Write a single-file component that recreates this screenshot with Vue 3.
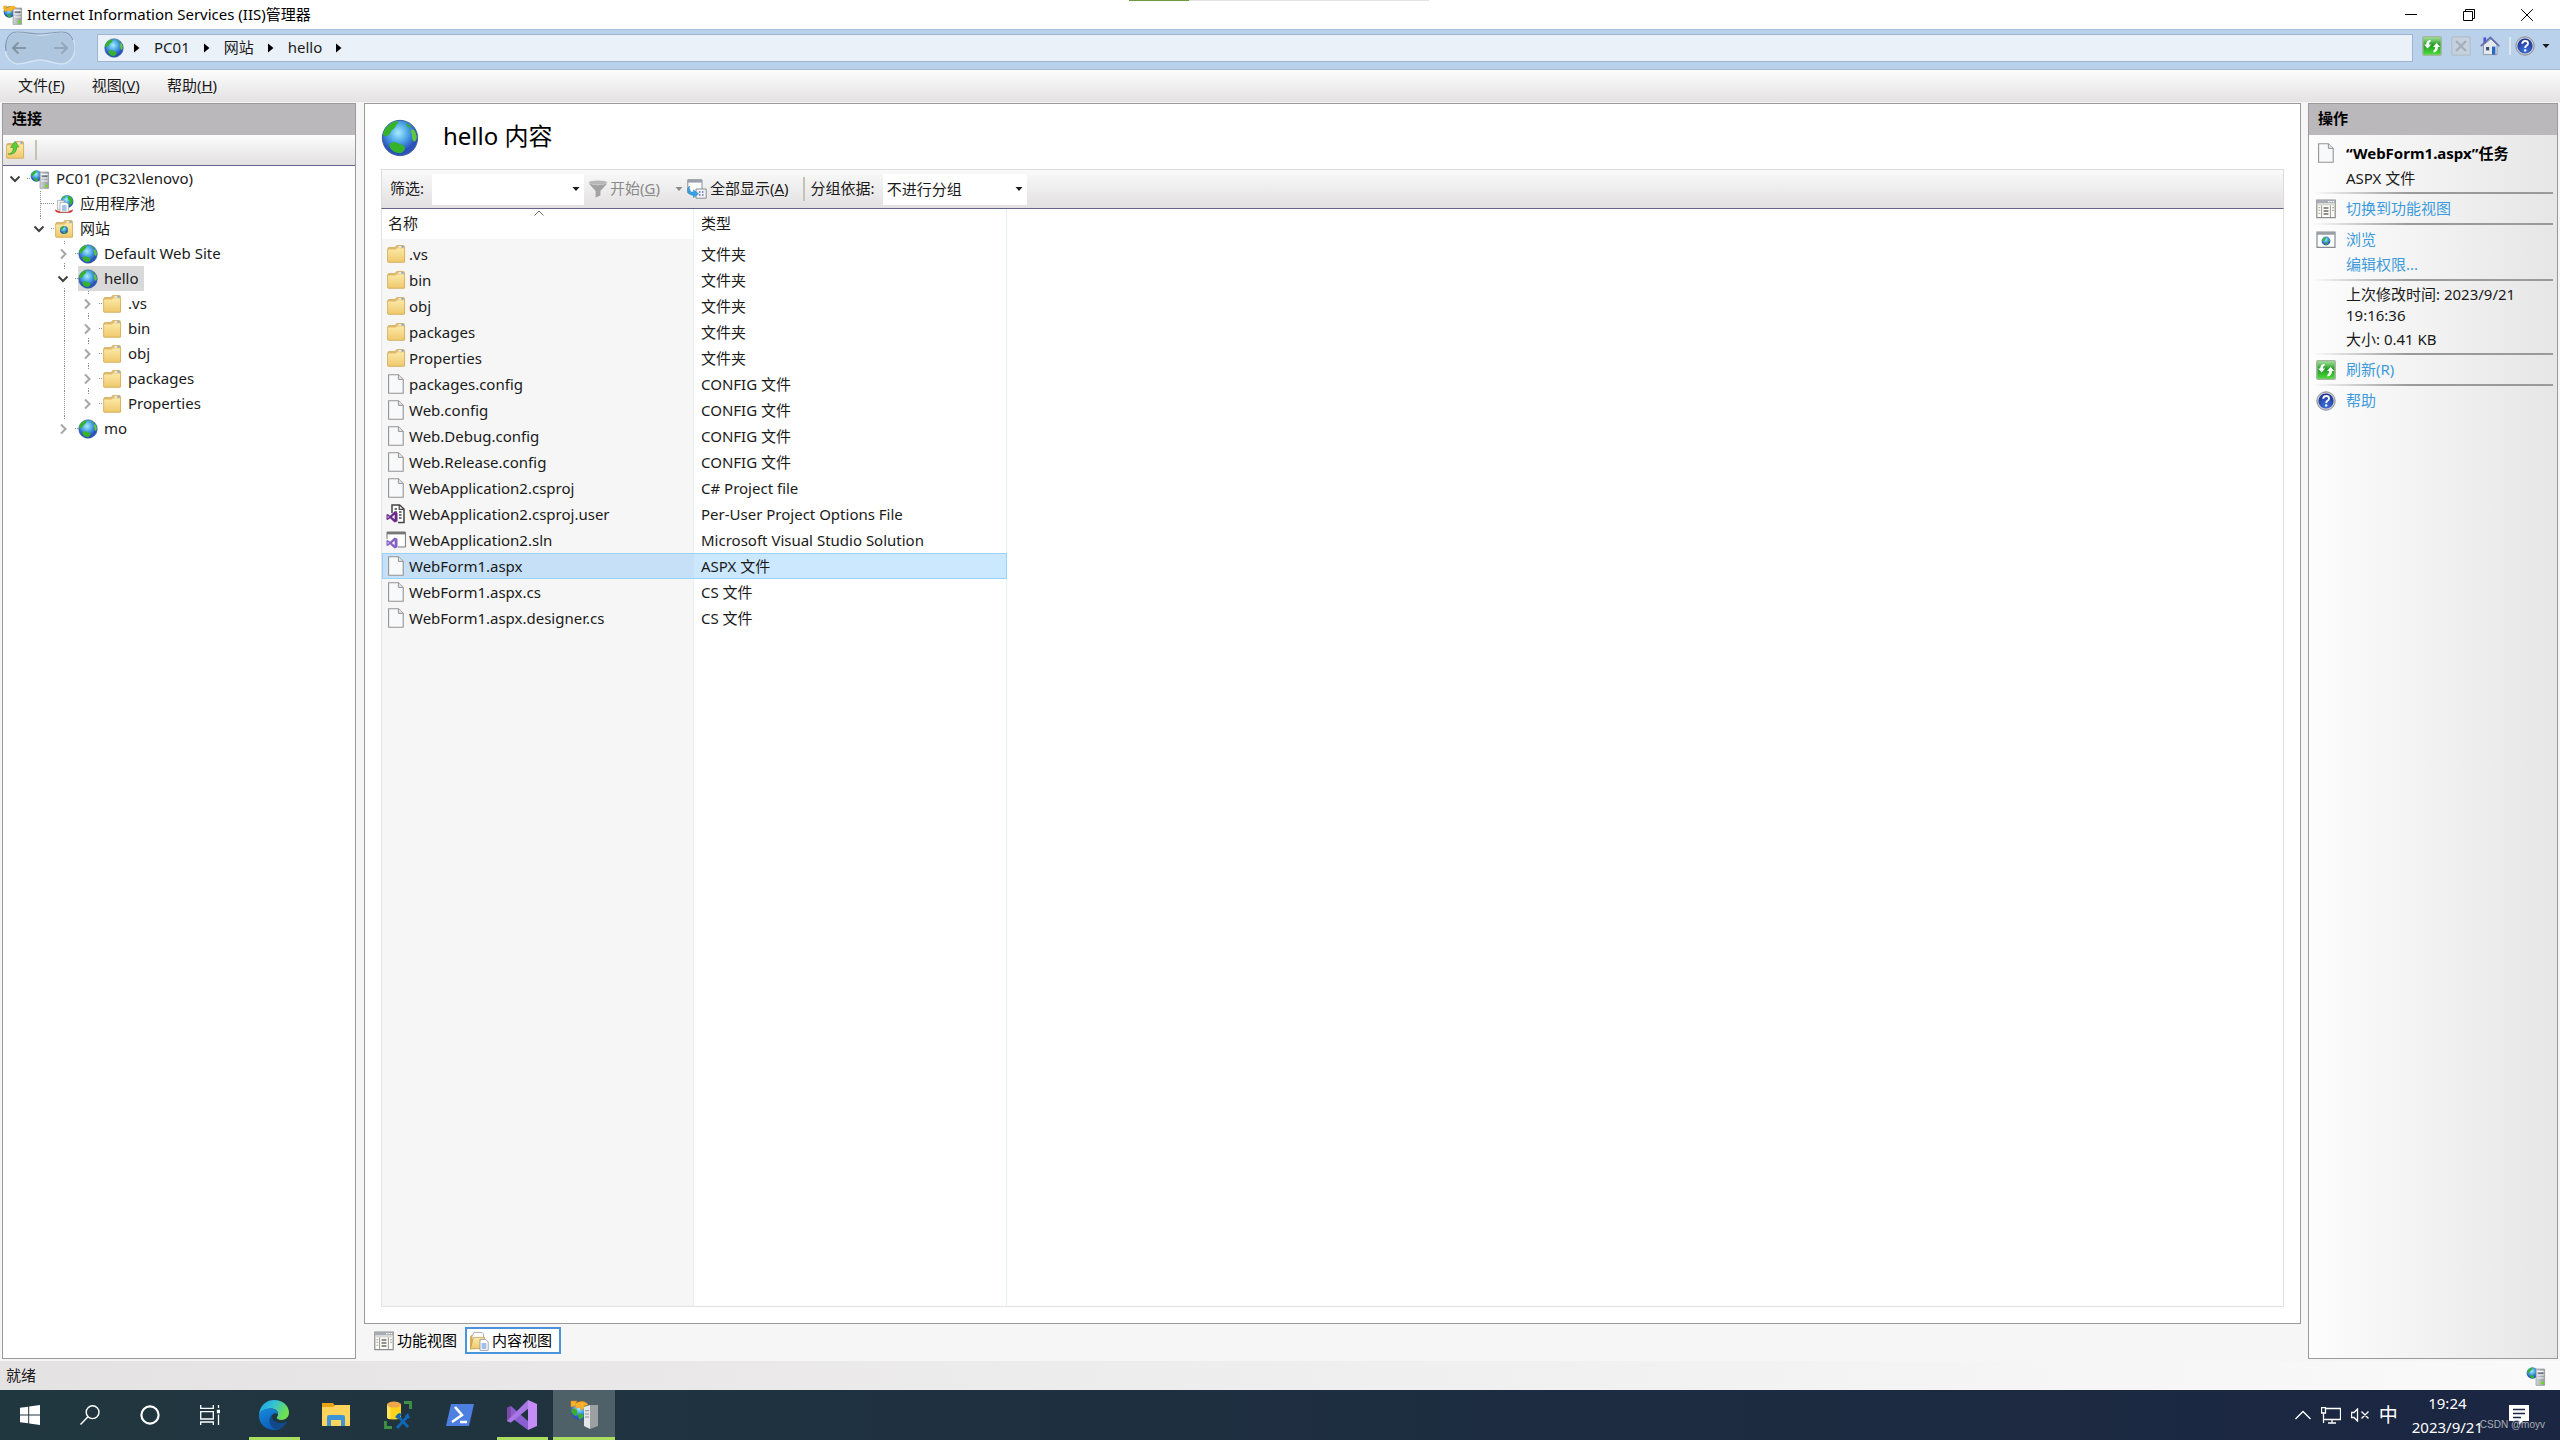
<template>
  <div class="screen">
    <svg class="defs" aria-hidden="true">
      <defs>
        <radialGradient id="gSea" cx="0.45" cy="0.35" r="0.7">
          <stop offset="0" stop-color="#a8ecff" />
          <stop offset="0.4" stop-color="#4ba4e4" />
          <stop offset="0.75" stop-color="#2a50bc" />
          <stop offset="1" stop-color="#2c55b8" />
        </radialGradient>
        <linearGradient id="gFolder" x1="0" y1="0" x2="0" y2="1">
          <stop offset="0" stop-color="#fdeaa8" />
          <stop offset="1" stop-color="#efc86c" />
        </linearGradient>
        <linearGradient id="gServer" x1="0" y1="0" x2="1" y2="0">
          <stop offset="0" stop-color="#d4d8dc" />
          <stop offset="1" stop-color="#90979d" />
        </linearGradient>
        <linearGradient id="gGreen" x1="0" y1="0" x2="0" y2="1">
          <stop offset="0" stop-color="#a8e89c" />
          <stop offset="0.45" stop-color="#229a26" />
          <stop offset="1" stop-color="#4be038" />
        </linearGradient>
        <radialGradient id="gHelp" cx="0.5" cy="0.8" r="0.8">
          <stop offset="0" stop-color="#3f74e0" />
          <stop offset="1" stop-color="#1a2f8c" />
        </radialGradient>
        <linearGradient id="gEdgeTop" x1="0" y1="0" x2="1" y2="0.4">
          <stop offset="0" stop-color="#1b9de2" />
          <stop offset="0.5" stop-color="#35c1d6" />
          <stop offset="1" stop-color="#6fe04e" />
        </linearGradient>
        <linearGradient id="gEdgeLow" x1="0" y1="0" x2="0.4" y2="1">
          <stop offset="0" stop-color="#1689dc" />
          <stop offset="1" stop-color="#0d5fb8" />
        </linearGradient>
      </defs>
      <symbol id="globe" viewBox="0 0 20 20">
        <circle cx="10" cy="10" r="9.3" fill="url(#gSea)" stroke="#3a5f96" stroke-width="0.5" />
        <path d="M3 4.2C5 2 7.4 1 9 1.2 8.8 2.6 8.2 3 7.6 4.2 6.8 5.4 5.8 5.4 5 7 4.4 8.6 3.4 9.4 1.1 8.6 1.2 7 1.8 5.4 3 4.2Z" fill="#35b32b" />
        <path d="M4.4 13.2C6.4 11.8 8 12.2 9.4 13 11.4 13.6 13 14.2 12.6 15.6 12 17.6 10.4 18.2 8.4 17.8 6 17.2 4.2 15.4 4.4 13.2Z" fill="#35b32b" />
        <path d="M16.2 5.4C17.6 5 18.4 7 18.8 9 19 11 18 12.4 17 11.6 16 10.4 16.6 9.2 16.2 8 15.8 7 15.4 6 16.2 5.4Z" fill="#5cc83a" />
        <path d="M13.6 2.2 16 4 15.2 4.8 13.4 3.4Z" fill="#35b32b" />
      </symbol>
      <symbol id="folder" viewBox="0 0 20 20">
        <path d="M2 18V4.4Q2 3.6 2.8 3.6H9L10.6 1.6H17.4Q18.4 1.6 18.4 2.6V18Z" fill="#e8c274" stroke="#c9a04c" stroke-width="0.7" />
        <path d="M1.6 5H9.6L11 3.8H18.6V17.6Q18.6 18.2 18 18.2H2.2Q1.6 18.2 1.6 17.6Z" fill="url(#gFolder)" stroke="#d2aa58" stroke-width="0.7" />
        <path d="M12.4 2.4H17V3.6H12.4Z" fill="#fff" />
        <path d="M15.4 2.2H17.2V3.6H15.4Z" fill="#4a9be8" />
      </symbol>
      <symbol id="siteFolder" viewBox="0 0 20 20">
        <use href="#folder" />
        <circle cx="10" cy="11" r="4" fill="url(#gSea)" />
        <path d="M7 9Q9 6.8 10.4 7.4 10 9 8.6 10.6 7.4 11 6.6 10.6ZM9 12.6Q11.6 12 12 13.4 11 15.2 9.6 14.6ZM13 8.8 14 11 13 12Z" fill="#35b32b" />
      </symbol>
      <symbol id="upFolder" viewBox="0 0 20 20">
        <use href="#folder" />
        <path d="M3 14C7 13.6 8.4 11 8.2 7.4H5.6L10 1.4 14 7H11.6C11.8 12 8.6 15 3 14Z" fill="#5bcf3a" stroke="#2f9422" stroke-width="0.6" />
      </symbol>
      <symbol id="server" viewBox="0 0 20 20">
        <circle cx="6.4" cy="7" r="5.8" fill="url(#gSea)" />
        <path d="M2 4Q4.6 1 7 1.6 6 4.4 4 5.4 3 7.4 1 7ZM3.4 9.4Q6.4 8.6 8.4 10.4 7.6 12.8 5.6 12.4Z" fill="#35b32b" />
        <path d="M10 3H18.6V19.4H10Z" fill="url(#gServer)" stroke="#858c92" stroke-width="0.6" />
        <path d="M11 5.4H17.8M11 9H17.8M11 12H17.8" stroke="#f4f6f7" stroke-width="1.1" />
        <path d="M12 7.2H17" stroke="#41474d" stroke-width="0.8" />
        <circle cx="16.4" cy="17" r="1.4" fill="#6de000" />
      </symbol>
      <symbol id="iis" viewBox="0 0 20 20">
        <use href="#server" />
        <path d="M0.6 1H4L3 3.4 7 1.4 11 1 13.4 3 10 4 8 7 6 5 2.4 6.6 0.6 4Z" fill="#ffb52a" stroke="#e08a10" stroke-width="0.4" />
      </symbol>
      <symbol id="bigiis" viewBox="0 0 28 30">
        <circle cx="10" cy="11" r="9" fill="url(#gSea)" />
        <path d="M2 9Q5 8 7 10 8 13 6 16 3 15 1.400 12ZM8 14Q13 13 14 16 12 20 9 19ZM14 5 18 7 17 11 14 10Z" fill="#3cae2c" />
        <path d="M1 1H7L5.500 3.500Q9 1 13 1.500T18 5L14 5.500 15 8 11 10 10 7 5 8.500 6 5.500 1 7Z" fill="#ffb02a" stroke="#e28a14" stroke-width="0.500" />
        <path d="M14 7 20 5V29L14 26Z" fill="#e4e6e8" />
        <path d="M20 5H28V26L20 29Z" fill="#9ca0a3" />
        <path d="M15 11 19 10.500M15 14H19M15 17H19" stroke="#8d9296" stroke-width="1" />
      </symbol>
      <symbol id="pool" viewBox="0 0 20 20">
        <circle cx="13" cy="7.4" r="6.4" fill="url(#gSea)" />
        <path d="M14 1.4Q18 2.6 19 6.6 18 11 15.6 11.4 14.4 9 16 7 13 5 14 1.4ZM8 4Q10 1.2 12 2 11 4 9 4.6Z" fill="#35b32b" />
        <path d="M1 15.6Q1 19 6 19H14Q19 19 19 15.6L15 17H5Z" fill="#d63a30" />
        <path d="M3.4 6.4H10V15.4H3.4Z" fill="#f6f6f6" stroke="#989ea4" stroke-width="0.7" />
        <path d="M6 8.4H12.4L14.6 10.6V18H6Z" fill="#fff" stroke="#989ea4" stroke-width="0.7" />
        <path d="M8 12H12.6M8 14H12.6M8 16H12.6" stroke="#3f7cd0" stroke-width="0.9" />
      </symbol>
      <symbol id="page" viewBox="0 0 20 20">
        <path d="M2.6 0.8H12.4L17.2 5.4V19.2H2.6Z" fill="#f8f9fa" stroke="#949494" stroke-width="1.1" />
        <path d="M12.4 0.8V5.4H17.2" fill="#e3e3e3" stroke="#949494" stroke-width="1" />
      </symbol>
      <symbol id="vsmark" viewBox="0 0 20 20">
        <path fill-rule="evenodd" d="M14.4 0.8 19.2 2.8V17.2L14.4 19.2 6.6 12 2.8 15.2 0.8 14V6L2.8 4.8 6.6 8ZM14.4 6.4 9.8 10 14.4 13.6ZM2.8 7.8V12.2L5 10Z" />
      </symbol>
      <symbol id="userfile" viewBox="0 0 20 20">
        <path d="M6 9V1H13.6L18 5V18.6H12" fill="#fff" stroke="#444" stroke-width="1.5" />
        <path d="M13.2 1V5.4H18" fill="none" stroke="#444" stroke-width="1.2" />
        <path d="M8.6 5H11M8.6 8H11M13 8H15.6M13 11H15.6M13 14H15.6" stroke="#444" stroke-width="1.3" />
        <use href="#vsmark" x="0" y="7" width="12" height="12" fill="#6d2a8c" />
      </symbol>
      <symbol id="slnfile" viewBox="0 0 20 20">
        <path d="M1 9V2H19.4V17H12" fill="#fff" stroke="#777" stroke-width="1" />
        <path d="M1 2H19.4V4.4H1Z" fill="#777" />
        <use href="#vsmark" x="0" y="7" width="12" height="12" fill="#8661c5" />
      </symbol>
      <symbol id="feature" viewBox="0 0 20 20">
        <path d="M0.8 1H19.2V18.6H0.8Z" fill="#fbfbf8" stroke="#8d8d8d" stroke-width="1.2" />
        <path d="M1 1H19V4.4H1Z" fill="#a7abb2" />
        <path d="M12 2.6H13.4M14.4 2.6H15.8M16.8 2.6H18" stroke="#fff" stroke-width="1.2" />
        <path d="M1 4.8H19V6.4H1Z" fill="#d8d8d0" />
        <path d="M5.6 6.4V18.6M14.4 6.4V18.6" stroke="#8d8d8d" stroke-width="0.9" />
        <path d="M2.4 8.6H4.2M2.4 11.4H4.2M2.4 14.4H4.2M16 8.6H18M16 11.4H18" stroke="#b6b6a8" stroke-width="1.2" />
        <path d="M7.6 9H12.4M7.6 12H12.4M7.6 15H12.4" stroke="#6c6c62" stroke-width="1.3" />
      </symbol>
      <symbol id="browse" viewBox="0 0 20 20">
        <path d="M1 2H19V17.4H1Z" fill="#fff" stroke="#858b91" stroke-width="1.2" />
        <path d="M1 2H19V4.8H1Z" fill="#9aa0a8" />
        <circle cx="10" cy="11" r="4.4" fill="url(#gSea)" />
        <path d="M6.8 9Q8.6 6.8 10.2 7.2 10 9.4 8.4 11 7 11.2 6.2 10.4ZM9 12.8Q12 12 12 13.6 11 15.4 9.6 15ZM13 8.6 14.2 11 13 12Z" fill="#35b32b" />
      </symbol>
      <symbol id="contentview" viewBox="0 0 20 20">
        <path d="M3 5 5 1.4H13L14.6 3V10H3Z" fill="#fff" stroke="#999" stroke-width="0.8" />
        <path d="M1 17.4V5.4L3 3.6V15Z" fill="#d4ac58" />
        <path d="M1.4 18 4.4 6.4H15.6L14.6 17.4Z" fill="url(#gFolder)" stroke="#bc9342" stroke-width="0.7" />
        <path d="M11 8.4H16.6L19.2 11V19.4H11Z" fill="#fff" stroke="#8c9096" stroke-width="0.8" />
        <path d="M12.6 13H17.4M12.6 15H17.4M12.6 17H17.4" stroke="#3f7cd0" stroke-width="1" />
      </symbol>
      <symbol id="refresh" viewBox="0 0 20 20">
        <rect x="0.8" y="0.8" width="18.4" height="18.4" rx="1" fill="url(#gGreen)" stroke="#a3b7a0" stroke-width="1.5" />
        <path d="M8.6 5.4Q6.800 5.800 7 8.600H9.200L5.600 12.600 2 8.600H4.200Q4.200 4.400 8.600 3.800Z" fill="#fff" />
        <path d="M11.400 14.800Q13.400 14 13.200 11H11L14.600 7 18.200 11H16Q16 15.800 11.400 16.600Z" fill="#fff" />
      </symbol>
      <symbol id="stop" viewBox="0 0 20 20">
        <rect x="0.8" y="0.8" width="18.4" height="18.4" rx="1" fill="#c6d1dd" stroke="#b1becc" stroke-width="1.2" />
        <path d="M5 5 15 15M15 5 5 15" stroke="#a3afbc" stroke-width="2.4" />
      </symbol>
      <symbol id="home" viewBox="0 0 20 20">
        <path d="M3.4 1.4H6.2V7H3.4Z" fill="#4d55d8" />
        <path d="M3.4 9 11 3 17 9V18.6H3.4Z" fill="#e6e9ee" stroke="#8b929c" stroke-width="0.9" />
        <path d="M0.8 10.2 10.4 1.4 19.4 10.2" fill="none" stroke="#646bb0" stroke-width="1.6" />
        <path d="M6 11H9.2V14.4H6Z" fill="#3d4f78" />
        <path d="M12 10.6H15.4V18.6H12Z" fill="#2868c0" />
      </symbol>
      <symbol id="help" viewBox="0 0 20 20">
        <circle cx="10" cy="10" r="9.2" fill="#c9cbd0" stroke="#8c9098" stroke-width="1" />
        <circle cx="10" cy="10" r="7.6" fill="url(#gHelp)" />
        <path d="M7.2 7.8Q7.4 5 10.2 5 13 5 13 7.4 13 8.8 11.4 9.8 10.2 10.6 10.2 12" fill="none" stroke="#fff" stroke-width="1.9" />
        <circle cx="10.2" cy="14.4" r="1.2" fill="#fff" />
      </symbol>
      <symbol id="funnel" viewBox="0 0 20 20">
        <ellipse cx="10" cy="3.6" rx="9.2" ry="2.2" fill="#b8b8b8" />
        <path d="M0.8 4.4 7.6 12V18.4L12.4 16.4V12L19.2 4.4Q10 8 0.8 4.4Z" fill="#a2a2a2" />
      </symbol>
      <symbol id="showall" viewBox="0 0 20 20">
        <path d="M0.8 0.8H15V14H0.8Z" fill="#fff" stroke="#888e96" stroke-width="1" />
        <path d="M0.8 0.8H15V3.6H0.8Z" fill="#9ba1aa" />
        <path d="M9 10H19.2V19.2H9Z" fill="#f4f4fa" stroke="#888e96" stroke-width="1" />
        <path d="M12 13H13.4M15 13H16.4M12 16H13.4M15 16H16.4" stroke="#5560a0" stroke-width="1.4" />
        <path d="M2.4 7Q2 13.4 6.4 13.4V11L11.6 14.8 6.4 18.6V16.2Q0.6 16.4 0.6 10Z" fill="#37a3e6" stroke="#1f78b8" stroke-width="0.5" />
      </symbol>
      <symbol id="tri" viewBox="0 0 8 8">
        <path d="M0.500 2H7.500L4 6Z" fill="currentColor" />
      </symbol>
    </svg>

    <header class="titlebar">
      <svg class="ic20"><use href="#iis" /></svg>
      <h1>Internet Information Services (IIS)管理器</h1>
      <div class="progress"><i></i></div>
      <div class="winbtns">
        <button aria-label="最小化"><svg viewBox="0 0 12 12"><path d="M0 5.5H12" /></svg></button>
        <button aria-label="还原"><svg viewBox="0 0 12 12"><path d="M0.5 2.5H9.5V11.5H0.5ZM2.5 2.5V0.5H11.5V9.5H9.5" /></svg></button>
        <button aria-label="关闭"><svg viewBox="0 0 12 12"><path d="M0.2 0.2 11.8 11.8M11.8 0.2 0.2 11.8" /></svg></button>
      </div>
    </header>

    <div class="addressbar">
      <div class="nav">
        <svg class="navshape" viewBox="0 0 70 34">
          <path d="M12 1C22 1 26 4 35 4S48 1 57 1C75 3 74 31 57 33 48 33 44 29 35 29S22 33 12 33C-5 29-3 3 12 1Z" fill="#aec6de" stroke="#d3e3f3" stroke-width="1.5" />
          <path d="M1 20C-1 8 5 1 12 1 22 1 26 3 35 3S48 1 57 1C62 1 66 4 68 9" fill="none" stroke="#8197af" stroke-width="1.2" />
        </svg>
        <button aria-label="后退"><svg viewBox="0 0 16 14"><path d="M15 7H2M7.5 1.5 2 7 7.5 12.5" stroke="#8593a2" /></svg></button>
        <button aria-label="前进"><svg viewBox="0 0 16 14"><path d="M1 7H14M8.500 1.500 14 7 8.500 12.500" stroke="#95a6b8" /></svg></button>
      </div>
      <nav class="crumbs">
        <svg class="ic20"><use href="#globe" /></svg>
        <template v-for="c in crumbs" :key="c">
          <svg class="sep" viewBox="0 0 6 10"><path d="M0 0.500 5.500 5 0 9.500Z" /></svg>
          <a href="#">{{ c }}</a>
        </template>
        <svg class="sep" viewBox="0 0 6 10"><path d="M0 0.500 5.500 5 0 9.500Z" /></svg>
      </nav>
      <div class="quick">
        <button aria-label="刷新"><svg class="ic20"><use href="#refresh" /></svg></button>
        <button aria-label="停止"><svg class="ic20"><use href="#stop" /></svg></button>
        <button aria-label="主页"><svg class="ic20"><use href="#home" /></svg></button>
        <i class="bar"></i>
        <button aria-label="帮助"><svg class="ic20"><use href="#help" /></svg><svg class="tri"><use href="#tri" /></svg></button>
      </div>
    </div>

    <nav class="menu">
      <button v-for="m in menus" :key="m.key">{{ m.name }}(<u>{{ m.key }}</u>)</button>
    </nav>

    <div class="body">
      <aside class="panel left">
        <h2>连接</h2>
        <div class="lefttools">
          <button aria-label="向上"><svg class="ic20"><use href="#upFolder" /></svg></button>
          <i class="groove"></i>
        </div>
        <ul class="tree">
          <li v-for="n in tree" :key="n.id" :class="{ leaf: !n.state, last: n.last, root: n.level === 0 }">
            <span v-for="g in n.level" :key="g" class="guide" :class="{ on: n.lines && n.lines.includes(g - 1) }"></span>
            <span class="twist">
              <button v-if="n.state" :class="n.state" :aria-label="n.state === 'open' ? '折叠' : '展开'">
                <svg v-if="n.state === 'open'" viewBox="0 0 12 12"><path d="M1.500 3.500 6 8 10.500 3.500" stroke="#404040" /></svg>
                <svg v-else viewBox="0 0 12 12"><path d="M4 1.500 8.500 6 4 10.500" stroke="#a6a6a6" /></svg>
              </button>
            </span>
            <span class="stub"></span>
            <span class="node" :class="{ picked: n.picked }">
              <svg class="ic20"><use :href="'#' + n.icon" /></svg>
              <span class="text">{{ n.text }}</span>
            </span>
          </li>
        </ul>
      </aside>

      <main class="center">
        <section class="panel content">
          <div class="heading">
            <svg class="bigglobe"><use href="#globe" /></svg>
            <h2>hello 内容</h2>
          </div>
          <div class="filterbar">
            <label for="filter">筛选:</label>
            <span class="combo">
              <input id="filter" v-model="filter" type="text" />
              <svg class="tri"><use href="#tri" /></svg>
            </span>
            <button class="go" disabled>
              <svg class="ic20"><use href="#funnel" /></svg><span class="text">开始(<u>G</u>)</span>
              <svg class="tri"><use href="#tri" /></svg>
            </button>
            <button class="all"><svg class="ic20"><use href="#showall" /></svg><span class="text">全部显示(<u>A</u>)</span></button>
            <i class="groove"></i>
            <label for="group">分组依据:</label>
            <span class="combo">
              <select id="group"><option>不进行分组</option></select>
              <svg class="tri"><use href="#tri" /></svg>
            </span>
          </div>
          <div class="list">
            <table>
              <thead>
                <tr>
                  <th><span class="text">名称</span><svg class="sort" viewBox="0 0 10 6"><path d="M0.500 5.500 5 1 9.500 5.500" /></svg></th>
                  <th><span class="text">类型</span></th>
                </tr>
              </thead>
              <tbody>
                <tr v-for="f in files" :key="f.name" :class="{ selected: f.name === current }" @click="current = f.name">
                  <td><div class="file"><svg class="ic20"><use :href="'#' + f.icon" /></svg>{{ f.name }}</div></td>
                  <td>{{ f.type }}</td>
                </tr>
              </tbody>
            </table>
          </div>
        </section>
        <div class="tabs">
          <button><svg class="ic20"><use href="#feature" /></svg><span class="text">功能视图</span></button>
          <button class="active"><svg class="ic20"><use href="#contentview" /></svg><span class="text">内容视图</span></button>
        </div>
      </main>

      <aside class="panel right">
        <h2>操作</h2>
        <div class="group">
          <p class="item"><svg class="ic20"><use href="#page" /></svg><b>“WebForm1.aspx”任务</b></p>
          <p class="item">ASPX 文件</p>
        </div>
        <div class="group">
          <p class="item"><svg class="ic20"><use href="#feature" /></svg><a href="#">切换到功能视图</a></p>
        </div>
        <div class="group">
          <p class="item"><svg class="ic20"><use href="#browse" /></svg><a href="#">浏览</a></p>
          <p class="item"><a href="#">编辑权限...</a></p>
        </div>
        <div class="group">
          <p class="item wrap">上次修改时间: 2023/9/21 19:16:36</p>
          <p class="item">大小: 0.41 KB</p>
        </div>
        <div class="group">
          <p class="item"><svg class="ic20"><use href="#refresh" /></svg><a href="#">刷新(R)</a></p>
        </div>
        <div class="group">
          <p class="item"><svg class="ic20"><use href="#help" /></svg><a href="#">帮助</a></p>
        </div>
      </aside>
    </div>

    <div class="status">
      <span class="text">就绪</span>
      <svg class="ic20"><use href="#server" /></svg>
    </div>

    <footer class="taskbar">
      <button aria-label="开始">
        <svg width="20" height="20" viewBox="0 0 20 20"><path d="M0 2.800 8.200 1.700V9.500H0ZM9.200 1.500 20 0V9.500H9.200ZM0 10.500H8.200V18.300L0 17.200ZM9.200 10.500H20V20L9.200 18.500Z" fill="#fff" /></svg>
      </button>
      <button aria-label="搜索">
        <svg width="20" height="20" viewBox="0 0 20 20" fill="none" stroke="#fff" stroke-width="1.400"><circle cx="12.600" cy="7.200" r="6.400" /><path d="M8 11.800 0.500 19.500" /></svg>
      </button>
      <button aria-label="Cortana">
        <svg width="20" height="20" viewBox="0 0 20 20"><circle cx="10" cy="10" r="8.600" fill="none" stroke="#fff" stroke-width="2.200" /></svg>
      </button>
      <button aria-label="任务视图">
        <svg width="20" height="20" viewBox="0 0 20 20" fill="none" stroke="#fff" stroke-width="1.300"><path d="M0.700 0V3.300H13.300V0M0.700 6.700H13.300V14H0.700ZM0.700 20V17H13.300V20M18.500 0V3M18.500 9.500V20" /><path d="M17.500 5.500H19.500V7.500H17.500Z" fill="#fff" /></svg>
      </button>
      <div class="apps">
        <button class="running" aria-label="Edge">
          <svg width="30" height="30" viewBox="0 0 30 30">
            <path d="M0 16C0 6 7 0 15 0 24 0 30 6 30 12.600 30 17 27 20 22.500 20 19.500 20 17.800 18.800 17.800 17.800 17.800 17 19 16.500 19 14 19 11 16 8.600 12 8.600 6 8.600 1 11.400 0 16Z" fill="url(#gEdgeTop)" />
            <path d="M0 16C0 11.500 5 8.500 11 8.600 16 8.700 19 11 19 14 16 12 12.400 14.500 12.400 18 12.400 23 17 28 22 28 20 29.400 17.800 30 15 30 6 30 0 23.500 0 16Z" fill="url(#gEdgeLow)" />
            <path d="M13.600 14.200C11 16.600 10 19 10.600 22 11.600 26.600 15.500 29.800 18 29.600 22.500 28.600 26 26 27.800 22.600 28.200 21.800 27.600 21.500 26.900 21.800 22 24.400 15 22.600 13 18 12.600 16.600 12.800 15 13.600 14.200Z" fill="#114a8b" />
          </svg>
        </button>
        <button aria-label="文件资源管理器">
          <svg width="28" height="24" viewBox="0 0 28 24"><path d="M0 0H11L13 3H28V22H0Z" fill="#e8a317" /><path d="M0 4H11L13 2H28V23H0Z" fill="#ffd35c" /><path d="M5 23V14Q5 12 7 12H21Q23 12 23 14V23H19V17H9V23Z" fill="#3a96d8" /></svg>
        </button>
        <button aria-label="SQL">
          <svg width="28" height="28" viewBox="0 0 28 28">
            <path d="M3 3V16Q3 18.500 10 18.500T17 16V3Z" fill="#ffd21c" /><path d="M3 3V16Q3 18 6.500 18.300V3Z" fill="#ffe45e" />
            <ellipse cx="10" cy="3.600" rx="7" ry="3" fill="#f0a64a" />
            <path d="M20 1.500H26.500V8M1.500 20V26.500H8" fill="none" stroke="#3f9145" stroke-width="2.800" />
            <path d="M13 14 24 26M24 15 13 27" stroke="#1067b4" stroke-width="2.600" /><path d="M11 16 15 12 18 13 14 18ZM21 15 24 12 26 17 22 18Z" fill="#1067b4" />
          </svg>
        </button>
        <button aria-label="PowerShell">
          <svg width="28" height="22" viewBox="0 0 28 22"><path d="M5 0H28L23 22H0Z" fill="#4c7fe0" /><path d="M9 3 16 11 6 18M14 18H21" fill="none" stroke="#fff" stroke-width="2.600" /></svg>
        </button>
        <button class="running" aria-label="Visual Studio">
          <svg width="30" height="30" viewBox="0 0 30 30">
            <path d="M0 8 4 6 22 22 21 30 4 17.600V22.500L0 21Z" fill="#8b5fd0" />
            <path d="M0 8 4 6V22.500L0 21Z" fill="#7d4aa8" />
            <path d="M0 21 4 22.500 22 8 21 0Z" fill="#a877e4" />
            <path d="M21 0 30 4V26L21 30Z" fill="#c48cf4" />
          </svg>
        </button>
        <button class="running current" aria-label="IIS">
          <svg width="28" height="30"><use href="#bigiis" /></svg>
        </button>
      </div>
      <div class="tray">
        <button aria-label="显示隐藏的图标"><svg width="16" height="10" viewBox="0 0 16 10"><path d="M0.500 9 8 1.500 15.500 9" /></svg></button>
        <button aria-label="网络"><svg width="20" height="17" viewBox="0 0 20 17"><path d="M4.500 1.500H19.500V12.500H2.500V6M0.500 0.500H4.500V6H0.500ZM2.500 12.500V16M11 12.500V16M7 16H15" /></svg></button>
        <button aria-label="音量"><svg width="18" height="14" viewBox="0 0 18 14"><path d="M0.500 4.500H3L6.500 1V13L3 9.500H0.500ZM10.500 3.500 17.500 10.500M17.500 3.500 10.500 10.500" /></svg></button>
        <button class="ime">中</button>
        <div class="clock"><span>19:24</span><span>2023/9/21</span></div>
        <button class="note" aria-label="通知"><svg width="20" height="20" viewBox="0 0 20 20"><path d="M0 0H20V16H14L10 20V16H0Z" fill="#fff" stroke="none" /><path d="M4 4.500H16M4 8.500H16M4 12.500H12" stroke="#1b2642" /></svg></button>
        <span class="mark">CSDN @moyv</span>
      </div>
    </footer>
  </div>
</template>

<script setup>
import { ref } from 'vue'

const filter = ref('')
const current = ref('WebForm1.aspx')

const crumbs = ['PC01', '网站', 'hello']

const menus = [
  { name: '文件', key: 'F' },
  { name: '视图', key: 'V' },
  { name: '帮助', key: 'H' }
]

// lines: ancestor levels that still have siblings below
const tree = [
  { id: 1, level: 0, text: 'PC01 (PC32\\lenovo)', icon: 'server', state: 'open' },
  { id: 2, level: 1, text: '应用程序池', icon: 'pool' },
  { id: 3, level: 1, text: '网站', icon: 'siteFolder', state: 'open', last: true },
  { id: 4, level: 2, text: 'Default Web Site', icon: 'globe', state: 'closed' },
  { id: 5, level: 2, text: 'hello', icon: 'globe', state: 'open', picked: true },
  { id: 6, level: 3, text: '.vs', icon: 'folder', state: 'closed', lines: [2] },
  { id: 7, level: 3, text: 'bin', icon: 'folder', state: 'closed', lines: [2] },
  { id: 8, level: 3, text: 'obj', icon: 'folder', state: 'closed', lines: [2] },
  { id: 9, level: 3, text: 'packages', icon: 'folder', state: 'closed', lines: [2] },
  { id: 10, level: 3, text: 'Properties', icon: 'folder', state: 'closed', lines: [2], last: true },
  { id: 11, level: 2, text: 'mo', icon: 'globe', state: 'closed', last: true }
]

const files = [
  { name: '.vs', type: '文件夹', icon: 'folder' },
  { name: 'bin', type: '文件夹', icon: 'folder' },
  { name: 'obj', type: '文件夹', icon: 'folder' },
  { name: 'packages', type: '文件夹', icon: 'folder' },
  { name: 'Properties', type: '文件夹', icon: 'folder' },
  { name: 'packages.config', type: 'CONFIG 文件', icon: 'page' },
  { name: 'Web.config', type: 'CONFIG 文件', icon: 'page' },
  { name: 'Web.Debug.config', type: 'CONFIG 文件', icon: 'page' },
  { name: 'Web.Release.config', type: 'CONFIG 文件', icon: 'page' },
  { name: 'WebApplication2.csproj', type: 'C# Project file', icon: 'page' },
  { name: 'WebApplication2.csproj.user', type: 'Per-User Project Options File', icon: 'userfile' },
  { name: 'WebApplication2.sln', type: 'Microsoft Visual Studio Solution', icon: 'slnfile' },
  { name: 'WebForm1.aspx', type: 'ASPX 文件', icon: 'page' },
  { name: 'WebForm1.aspx.cs', type: 'CS 文件', icon: 'page' },
  { name: 'WebForm1.aspx.designer.cs', type: 'CS 文件', icon: 'page' }
]
</script>

<style>
body {
  margin: 0;
}
</style>

<style scoped>
* {
  box-sizing: border-box;
}

.screen {
  display: flex;
  flex-direction: column;
  min-height: 100vh;
  background: #f6f6f6;
  color: #1a1a1a;
  font-family: "Noto Sans", "Noto Sans CJK SC", sans-serif;
  font-size: 15px;
  line-height: 20px;
}

.defs {
  position: absolute;
  width: 0;
  height: 0;
}

h1,
h2,
p,
ul {
  margin: 0;
  padding: 0;
}

button {
  display: flex;
  align-items: center;
  padding: 0;
  border: 0;
  background: none;
  color: inherit;
  font: inherit;
}

a {
  color: inherit;
  text-decoration: none;
}

.text,
label {
  padding-bottom: 2px;
}

.ic20 {
  flex: none;
  width: 20px;
  height: 20px;
}

.tri {
  flex: none;
  width: 8px;
  height: 8px;
}

.groove {
  width: 2px;
  height: 20px;
  background: #c5c3b4;
}

/* title bar */
.titlebar {
  position: relative;
  display: flex;
  align-items: center;
  height: 29px;
  padding-right: 4px;
  padding-left: 3px;
  background: #fff;
}

.titlebar h1 {
  flex: 1;
  margin-left: 4px;
  padding-bottom: 2px;
  color: #000;
  font-size: 15px;
  font-weight: 400;
}

.progress {
  position: absolute;
  top: 0;
  left: 44.1%;
  width: 300px;
  height: 1px;
  background: #e3e3e3;
}

.progress i {
  display: block;
  width: 60px;
  height: 1px;
  background: #6f9a3e;
}

.winbtns {
  display: flex;
}

.winbtns button {
  justify-content: center;
  width: 58px;
  height: 28px;
}

.winbtns svg {
  width: 12px;
  height: 12px;
  fill: none;
  stroke: #000;
}

/* address bar */
.addressbar {
  display: flex;
  align-items: center;
  height: 41px;
  padding: 0 10px 4px 5px;
  border-top: 1px solid #a9c2db;
  border-bottom: 1px solid #a5bbd3;
  background: #b9d1ea;
}

.nav {
  position: relative;
  display: flex;
  align-items: center;
  justify-content: space-between;
  width: 70px;
  height: 34px;
  margin-right: 22px;
  padding: 0 6px;
}

.nav button {
  position: relative;
}

.navshape {
  position: absolute;
  top: 0;
  left: 0;
  width: 70px;
  height: 34px;
}

.nav button svg {
  width: 16px;
  height: 14px;
  fill: none;
  stroke-width: 2;
}

.crumbs {
  display: flex;
  flex: 1;
  align-items: center;
  height: 28px;
  padding-left: 6px;
  border: 1px solid #9db5cf;
  background: #eaf1f9;
}

.crumbs a {
  margin: 0 14px;
  padding-bottom: 2px;
}

.sep {
  width: 6px;
  height: 10px;
}

.crumbs .ic20 {
  margin-right: 10px;
}

.quick {
  display: flex;
  align-items: center;
  gap: 9px;
  padding-bottom: 4px;
  padding-left: 9px;
}

.quick .bar {
  width: 2px;
  height: 18px;
  background: #dfe5ec;
}

.quick .bar + button {
  gap: 7px;
  margin-left: -5px;
}

/* menu */
.menu {
  display: flex;
  gap: 27px;
  height: 32px;
  padding-bottom: 2px;
  padding-left: 18px;
  background: linear-gradient(#fdfdfd, #e4e2e3);
}

/* panels */
.body {
  display: flex;
  flex: 1;
  padding: 1px 2px 2px;
}

.panel {
  border: 1px solid #9a9a9c;
  background: #fff;
}

.panel.left {
  flex: none;
  width: 354px;
}

.left h2,
.right h2 {
  height: 31px;
  padding-left: 9px;
  background: #bab8ba;
  color: #000;
  font-size: 15px;
  font-weight: 600;
  line-height: 29px;
}

.lefttools {
  display: flex;
  align-items: center;
  gap: 10px;
  height: 31px;
  padding-left: 2px;
  border-bottom: 1px solid #63638c;
  background: linear-gradient(#fcfcfc, #e2e0e1);
}

/* tree */
.tree {
  list-style: none;
}

.tree li {
  display: flex;
  align-items: center;
  height: 25px;
}

.guide {
  flex: none;
  width: 24px;
  height: 25px;
}

.guide.on,
.twist {
  background: repeating-linear-gradient(#8c8c8c 0 1px, transparent 1px 2px) 13px 0 / 1px 100% no-repeat;
}

.twist {
  display: flex;
  flex: none;
  align-items: center;
  justify-content: center;
  width: 24px;
  height: 25px;
}

.last .twist {
  background-size: 1px 50%;
}

.root .twist {
  background: none;
}

.twist button {
  height: 19px;
  background: #fff;
}

.twist svg {
  width: 12px;
  height: 12px;
  fill: none;
  stroke-width: 2;
}

.stub {
  flex: none;
  width: 3px;
  height: 1px;
  background: repeating-linear-gradient(90deg, #8c8c8c 0 1px, transparent 1px 2px);
}

.leaf .stub {
  width: 13px;
  margin-left: -10px;
}

.node {
  display: flex;
  align-items: center;
  gap: 6px;
  height: 25px;
  padding-right: 5px;
}

.node.picked {
  background: #d9d9d9;
}

/* content */
.center {
  display: flex;
  flex: 1;
  flex-direction: column;
  min-width: 0;
  padding: 0 7px 0 8px;
}

.content {
  display: flex;
  flex: 1;
  flex-direction: column;
  padding: 13px 16px 16px;
}

.heading {
  display: flex;
  align-items: center;
  gap: 24px;
  height: 52px;
  padding-bottom: 10px;
}

.bigglobe {
  width: 38px;
  height: 38px;
}

.heading h2 {
  padding-bottom: 4px;
  color: #000;
  font-size: 24px;
  font-weight: 400;
  line-height: 32px;
}

.filterbar {
  display: flex;
  align-items: center;
  height: 40px;
  padding-left: 8px;
  border: 1px solid #dcdcdc;
  border-bottom: 1px solid #63638c;
  background: linear-gradient(#fafafa, #e2e0e1);
}

.combo {
  position: relative;
  display: flex;
  align-items: center;
  height: 31px;
  margin: 0 4px 0 8px;
  background: #fff;
}

.combo .tri {
  position: absolute;
  right: 4px;
  pointer-events: none;
}

.combo input,
.combo select {
  width: 152px;
  height: 31px;
  padding: 0 20px 1px 4px;
  border: 0;
  background: none;
  appearance: none;
  color: inherit;
  font: inherit;
}

.combo select {
  width: 144px;
}

.go {
  color: #8a8a8a;
}

.go .ic20 {
  margin-right: 2px;
}

.all .ic20 {
  margin-right: 3px;
}

.go .tri {
  margin: 0 4px 0 15px;
}

.filterbar .groove {
  height: 24px;
  margin: 0 6px 0 14px;
}

/* the shaded sorted column and both column lines run to the bottom */
.list {
  flex: 1;
  border: 1px solid #e2e2e2;
  border-top: 0;
  background:
    linear-gradient(#e6f0f8, #e6f0f8) 311px 0 / 1px 100% no-repeat,
    linear-gradient(#e6f0f8, #e6f0f8) 624px 0 / 1px 100% no-repeat,
    linear-gradient(#f6f6f6, #f6f6f6) 0 30px / 311px 100% no-repeat;
}

.list table {
  width: 625px;
  border-spacing: 0;
  table-layout: fixed;
}

.list th {
  position: relative;
  height: 32px;
  font-weight: 400;
  text-align: left;
}

.list th .text {
  display: block;
  padding-bottom: 4px;
}

.list th,
.list td {
  padding: 0 0 0 7px;
}

.list th:first-child {
  width: 312px;
  padding-left: 6px;
}

.list td {
  height: 26px;
}

.list td:first-child {
  padding-left: 4px;
}

.sort {
  position: absolute;
  top: 1px;
  left: 50%;
  width: 10px;
  height: 6px;
  margin-left: -4px;
  fill: none;
  stroke: #6d6d6d;
}

.file {
  display: flex;
  align-items: center;
  gap: 3px;
}

.selected td {
  border-top: 1px solid #99d1ff;
  border-bottom: 1px solid #99d1ff;
  background: #cce8ff;
}

.selected td:first-child {
  border-left: 1px solid #99d1ff;
  padding-left: 3px;
  background: #c5e0f7;
}

.selected td:last-child {
  border-right: 1px solid #99d1ff;
}

/* view tabs */
.tabs {
  display: flex;
  align-items: flex-start;
  gap: 8px;
  height: 35px;
  padding-top: 3px;
  padding-left: 8px;
}

.tabs button {
  gap: 3px;
  height: 27px;
  padding-right: 7px;
  padding-left: 2px;
  color: #000;
}

.tabs button:first-child {
  padding-right: 0;
}

.tabs .active {
  border: 2px solid #4a94dc;
  background: #fff;
}

/* actions */
.panel.right {
  flex: none;
  width: 250px;
  background: linear-gradient(90deg, #fdfdfd, #e6e6e6);
}

.group {
  margin: 0 4px;
  padding: 2px 0 2px 3px;
  border-bottom: 2px solid;
  border-image: linear-gradient(90deg, transparent, #9a9a9a 40%, #9a9a9a) 1;
}

.group:last-child {
  border-bottom: 0;
}

h2 + .group {
  padding-top: 5px;
}

.item {
  display: flex;
  align-items: center;
  gap: 10px;
  min-height: 25px;
  padding-left: 30px;
}

.item:has(svg) {
  padding-left: 0;
}

.item b {
  color: #000;
  font-weight: 700;
}

.item a {
  padding-bottom: 1px;
  color: #3d9bdc;
}

.item.wrap {
  padding-top: 1px;
  line-height: 21px;
}

/* status bar */
.status {
  display: flex;
  align-items: center;
  justify-content: space-between;
  height: 29px;
  padding: 0 14px 0 6px;
  background: linear-gradient(90deg, #e4e2e3, #fafafa);
}

/* taskbar */
.taskbar {
  display: flex;
  height: 50px;
  background: linear-gradient(90deg, #21373f, #1b2642);
  color: #fff;
}

.taskbar > button,
.apps button {
  justify-content: center;
  width: 60px;
  height: 50px;
}

.apps {
  display: flex;
  margin-left: 3px;
}

.apps button {
  width: 62px;
}

.running {
  background: linear-gradient(#a9de5f, #a9de5f) center bottom / 51px 3px no-repeat;
}

.running.current {
  background: linear-gradient(#a9de5f, #a9de5f) center bottom / 100% 3px no-repeat #4e6068;
}

.tray {
  position: relative;
  display: flex;
  align-items: center;
  gap: 10px;
  margin-left: auto;
  padding-right: 31px;
}

.tray svg {
  fill: none;
  stroke: #fff;
  stroke-width: 1.300;
}

.ime {
  font-size: 19px;
}

.clock {
  display: flex;
  flex-direction: column;
  align-items: center;
  margin: 0 16px 0 4px;
  line-height: 24px;
}

.mark {
  position: absolute;
  right: 15px;
  bottom: 8px;
  color: #a9adb8;
  font-family: "Liberation Sans", Arial, sans-serif;
  font-size: 10px;
  line-height: 14px;
}
</style>
